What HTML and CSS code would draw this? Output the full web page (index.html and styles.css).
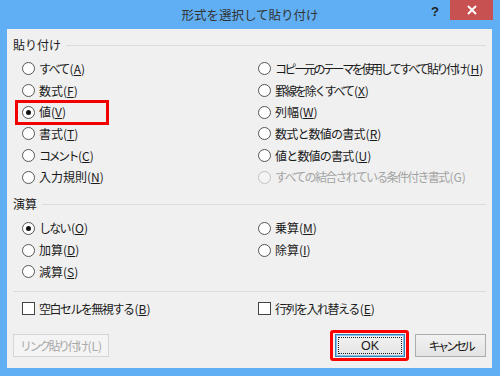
FILE: index.html
```html
<!DOCTYPE html>
<html lang="ja">
<head>
<meta charset="utf-8">
<link rel="stylesheet" href="styles.css">
</head>
<body>
<div class="window">
  <div class="titlebar">
    <div class="title">形式を選択して貼り付け</div>
    <div class="controls">
      <span class="help">?</span>
      <span class="close"><svg width="10" height="10" viewBox="0 0 10 10"><path d="M1 1L9 9M9 1L1 9" stroke="#fff" stroke-width="2"/></svg></span>
    </div>
  </div>
  <div class="client">
    <div class="group-head head1"><span>貼り付け</span><i></i></div>
    <div class="opts opts1">
      <label class="opt"><span class="radio"></span><span class="j17">すべて</span>(<u>A</u>)</label>
      <label class="opt"><span class="radio"></span><span class="j24">コピー元のテーマを使用してすべて貼り付け</span>(<u>H</u>)</label>
      <label class="opt"><span class="radio"></span>数式(<u>F</u>)</label>
      <label class="opt"><span class="radio"></span><span class="j21">罫線を除くすべて</span>(<u>X</u>)</label>
      <label class="opt mark"><span class="radio on"></span>値(<u>V</u>)</label>
      <label class="opt"><span class="radio"></span>列幅(<u>W</u>)</label>
      <label class="opt"><span class="radio"></span>書式(<u>T</u>)</label>
      <label class="opt"><span class="radio"></span><span class="j08">数式と数値の書式</span>(<u>R</u>)</label>
      <label class="opt"><span class="radio"></span><span class="j25">コメント</span>(<u>C</u>)</label>
      <label class="opt"><span class="radio"></span><span class="j08">値と数値の書式</span>(<u>U</u>)</label>
      <label class="opt"><span class="radio"></span>入力規則(<u>N</u>)</label>
      <label class="opt disabled"><span class="radio"></span><span class="j17">すべての結合されている条件付き書式</span>(G)</label>
    </div>
    <div class="group-head head2"><span>演算</span><i></i></div>
    <div class="opts opts2">
      <label class="opt"><span class="radio on"></span><span class="j17">しない</span>(<u>O</u>)</label>
      <label class="opt"><span class="radio"></span>乗算(<u>M</u>)</label>
      <label class="opt"><span class="radio"></span>加算(<u>D</u>)</label>
      <label class="opt"><span class="radio"></span>除算(<u>I</u>)</label>
      <label class="opt"><span class="radio"></span>減算(<u>S</u>)</label>
      <span></span>
    </div>
    <div class="divider"></div>
    <div class="opts opts3">
      <label class="opt"><span class="check"></span><span class="j15">空白セルを無視する</span>(<u>B</u>)</label>
      <label class="opt"><span class="check"></span><span class="j15">行列を入れ替える</span>(<u>E</u>)</label>
    </div>
    <div class="buttons">
      <button class="btn link" disabled><span class="j25">リンク貼り付け</span>(L)</button>
      <span class="spacer"></span>
      <span class="okwrap"><button class="btn ok"><span class="focus">OK</span></button></span>
      <button class="btn cancel"><span class="j32">キャンセル</span></button>
    </div>
  </div>
</div>
</body>
</html>
```
FILE: styles.css
```css
html, body {
  margin: 0;
  padding: 0;
}
body {
  width: 500px;
  height: 376px;
  overflow: hidden;
  background: #60aff4;
  font-family: "Noto Sans CJK JP", "Noto Sans", sans-serif;
  font-size: 12px;
  color: #1a1a1a;
}
.window {
  width: 500px;
  height: 376px;
  display: flex;
  flex-direction: column;
}
.titlebar {
  height: 29px;
  display: grid;
  flex: none;
}
.title {
  grid-area: 1 / 1;
  justify-self: center;
  align-self: center;
  font-size: 12.5px;
  color: #333;
  line-height: 16px;
  margin-top: 1px;
}
.controls {
  grid-area: 1 / 1;
  justify-self: end;
  align-self: start;
  display: flex;
  align-items: flex-start;
  margin-right: 7px;
}
.help {
  font-family: "Liberation Sans", sans-serif;
  font-weight: bold;
  font-size: 13px;
  color: #222;
  line-height: 14px;
  margin-top: 5px;
  margin-right: 11px;
}
.close {
  width: 43px;
  height: 20px;
  background: #c75050;
  display: flex;
  align-items: center;
  justify-content: center;
}
.client {
  flex: 1;
  margin: 0 8px 8px 7px;
  background: #f0f0f0;
  padding: 0 6px;
  display: flex;
  flex-direction: column;
}
.group-head {
  display: flex;
  align-items: center;
  height: 20px;
  line-height: 20px;
}
.group-head i {
  flex: 1;
  height: 1px;
  background: #dcdcdc;
  margin-left: 5px;
}
.head1 { margin-top: 6px; }
.head2 { margin-top: 6px; }
.opts {
  display: grid;
  grid-template-columns: 236px 1fr;
  grid-auto-rows: 21.7px;
  padding-left: 9px;
}
.opts1 { padding-top: 3px; }
.opts2 { padding-top: 3.5px; }
.opts3 { padding-top: 6px; }
.opt {
  display: flex;
  align-items: center;
  white-space: nowrap;
  line-height: 16px;
}
.opt u {
  text-decoration: underline;
  text-underline-offset: 1px;
}
.j08 { letter-spacing: -0.8px; }
.j15 { letter-spacing: -1.5px; }
.j17 { letter-spacing: -1.7px; }
.j21 { letter-spacing: -2.1px; }
.j24 { letter-spacing: -2.4px; }
.j25 { letter-spacing: -2.5px; }
.j32 { letter-spacing: -3.2px; }
.j08, .j15, .j17, .j21, .j24, .j25 { margin-right: 1px; }
.radio {
  width: 11px;
  height: 11px;
  border: 1px solid #555;
  border-radius: 50%;
  background: #fff;
  margin-right: 4px;
  display: flex;
  align-items: center;
  justify-content: center;
  flex: none;
}
.radio.on::after {
  content: "";
  width: 5px;
  height: 5px;
  border-radius: 50%;
  background: #111;
}
.check {
  width: 11px;
  height: 11px;
  border: 1px solid #444;
  background: #fff;
  margin-right: 4px;
  flex: none;
}
.disabled {
  color: #a3a3a3;
}
.disabled .radio {
  border-color: #c2c2c2;
  background: #f4f4f4;
}
.mark {
  position: relative;
}
.mark::after {
  content: "";
  position: absolute;
  left: -7px;
  top: -1.5px;
  width: 94px;
  height: 25px;
  border: 3px solid #f20000;
  box-sizing: border-box;
}
.divider {
  height: 1px;
  background: #dcdcdc;
  margin-top: 8px;
}
.buttons {
  display: flex;
  align-items: center;
  margin-top: 15px;
}
.spacer { flex: 1; }
.btn {
  font-family: inherit;
  font-size: 12px;
  height: 23px;
  padding: 0;
  margin: 0;
  border: 1px solid #adadad;
  background: linear-gradient(#f2f2f2, #e3e3e3);
  color: #1a1a1a;
  box-sizing: border-box;
  display: flex;
  align-items: center;
  justify-content: center;
}
.link {
  width: 96px;
  border-color: #d5d5d5;
  background: #f4f4f4;
  color: #a8a8a8;
}
.okwrap {
  position: relative;
  display: flex;
}
.okwrap::after {
  content: "";
  position: absolute;
  left: -5px;
  top: -4px;
  right: -4px;
  bottom: -4px;
  border: 3.5px solid #f00;
  border-radius: 3px;
}
.ok {
  width: 70px;
  border-color: #3c7fb1;
  box-shadow: inset 0 0 0 1px #7fc4f4;
}
.ok .focus {
  display: flex;
  align-items: center;
  justify-content: center;
  width: 62px;
  height: 15px;
  border: 1px dotted #222;
  font-family: "Liberation Sans", sans-serif;
  font-size: 12.5px;
}
.cancel {
  width: 71px;
  margin-left: 10px;
}
```
